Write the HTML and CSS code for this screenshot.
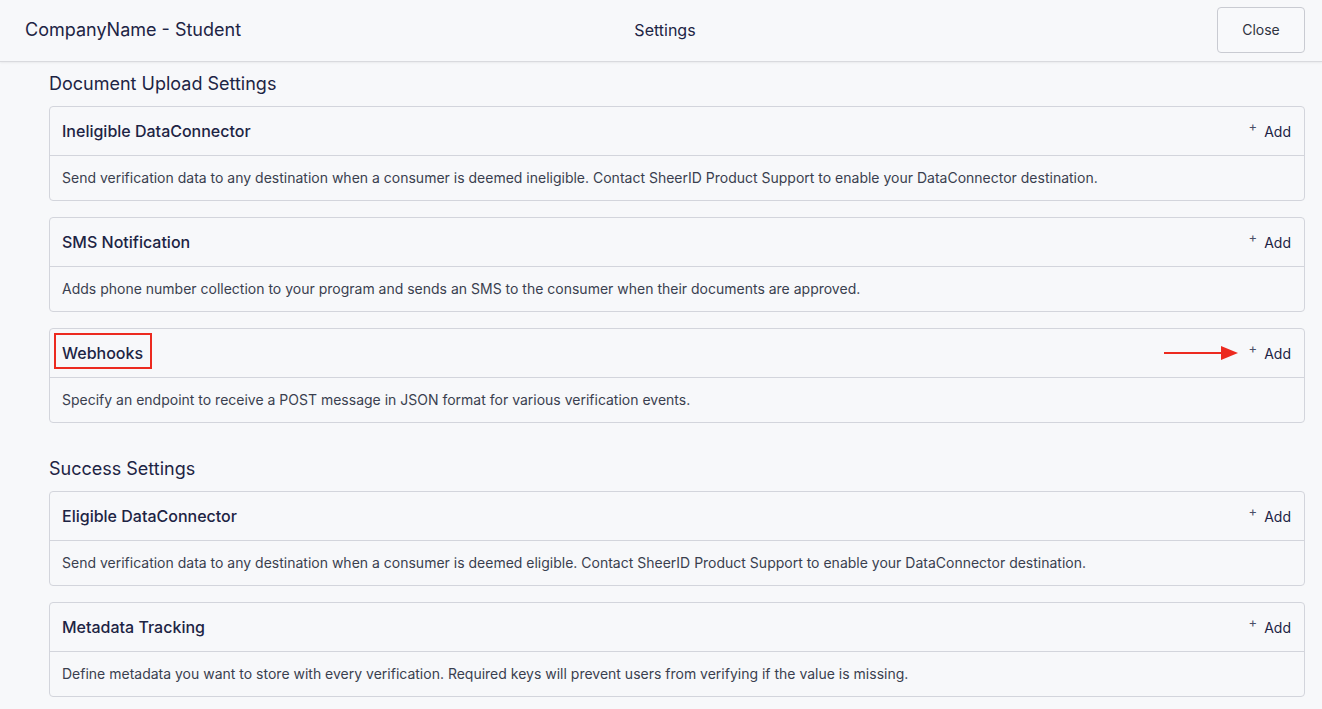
FILE: index.html
```html
<!DOCTYPE html>
<html lang="en">
<head>
<meta charset="utf-8">
<title>Settings</title>
<link rel="stylesheet" href="styles.css">
</head>
<body>
<header class="topbar">
  <div class="brand">CompanyName - Student</div>
  <div class="page-title">Settings</div>
  <div class="actions"><button class="btn-close" type="button">Close</button></div>
</header>
<main class="content">
  <h2 class="section-title">Document Upload Settings</h2>
  <section class="card">
    <div class="card-head">
      <span class="card-title">Ineligible DataConnector</span>
      <span class="add"><span class="plus">+</span>Add</span>
    </div>
    <div class="card-body">Send verification data to any destination when a consumer is deemed ineligible. Contact SheerID Product Support to enable your DataConnector destination.</div>
  </section>
  <section class="card">
    <div class="card-head">
      <span class="card-title">SMS Notification</span>
      <span class="add"><span class="plus">+</span>Add</span>
    </div>
    <div class="card-body">Adds phone number collection to your program and sends an SMS to the consumer when their documents are approved.</div>
  </section>
  <section class="card">
    <div class="card-head">
      <span class="card-title highlighted">Webhooks</span>
      <span class="add pointed">
        <svg class="arrow" width="74" height="16" viewBox="0 0 74 16" aria-hidden="true">
          <rect x="0" y="7" width="60" height="2" fill="#ec2a1f"/>
          <polygon points="57,1 74,8 57,15" fill="#ec2a1f"/>
        </svg>
        <span class="plus">+</span>Add</span>
    </div>
    <div class="card-body">Specify an endpoint to receive a POST message in JSON format for various verification events.</div>
  </section>

  <h2 class="section-title second">Success Settings</h2>
  <section class="card">
    <div class="card-head">
      <span class="card-title">Eligible DataConnector</span>
      <span class="add"><span class="plus">+</span>Add</span>
    </div>
    <div class="card-body">Send verification data to any destination when a consumer is deemed eligible. Contact SheerID Product Support to enable your DataConnector destination.</div>
  </section>
  <section class="card">
    <div class="card-head">
      <span class="card-title">Metadata Tracking</span>
      <span class="add"><span class="plus">+</span>Add</span>
    </div>
    <div class="card-body">Define metadata you want to store with every verification. Required keys will prevent users from verifying if the value is missing.</div>
  </section>
</main>
</body>
</html>
```

FILE: styles.css
```css
*, *::before, *::after { box-sizing: border-box; }
html, body { margin: 0; padding: 0; }
body {
  background: #f7f8fa;
  font-family: Inter, "Noto Sans", "Liberation Sans", sans-serif;
  color: #1d2444;
  height: 709px;
  overflow: hidden;
}
.topbar {
  height: 62px;
  display: grid;
  grid-template-columns: 1fr auto 1fr;
  align-items: center;
  padding: 0 17px 0 25px;
  border-bottom: 1px solid #d9dade;
  box-shadow: 0 1px 2px rgba(0,0,0,0.06);
  background: #f7f8fa;
}
.brand { font-size: 18px; color: #1d2444; margin-top: -2px; }
.page-title { font-size: 16px; color: #1d2444; margin-top: -2px; }
.actions { display: flex; justify-content: flex-end; }
.btn-close {
  width: 88px;
  height: 46px;
  margin-top: -2px;
  border: 1px solid #c9cbd2;
  border-radius: 4px;
  background: #f8f9fb;
  font-family: inherit;
  font-size: 14px;
  color: #2f3340;
}
.content {
  padding: 10px 17px 0 49px;
}
.section-title {
  margin: 0 0 10px;
  font-size: 18px;
  line-height: 24px;
  font-weight: 400;
  color: #1d2444;
}
.section-title.second { margin-top: 34px; }
.card {
  border: 1px solid #d3d5dc;
  border-radius: 4px;
  margin-bottom: 16px;
  background: #f7f8fa;
}
.card-head {
  height: 49px;
  border-bottom: 1px solid #d3d5dc;
  display: flex;
  align-items: center;
  justify-content: space-between;
  padding: 0 13px 0 12px;
}
.card-title {
  font-size: 16px;
  font-weight: 500;
  color: #1d2444;
  position: relative;
}
.card-title.highlighted::after {
  content: "";
  position: absolute;
  left: -8px;
  top: -10px;
  width: 98px;
  height: 36px;
  border: 2px solid #ec2a1f;
}
.add {
  font-size: 14px;
  color: #1d2444;
  display: flex;
  align-items: center;
  position: relative;
}
.plus {
  font-size: 13px;
  color: #4a5068;
  margin-right: 7px;
  position: relative;
  top: -5px;
}
.arrow {
  position: absolute;
  left: -85px;
  top: 0px;
}
.card-body {
  height: 44px;
  display: flex;
  align-items: center;
  padding: 0 12px 2px;
  font-size: 14px;
  color: #3a3f4f;
}
```
